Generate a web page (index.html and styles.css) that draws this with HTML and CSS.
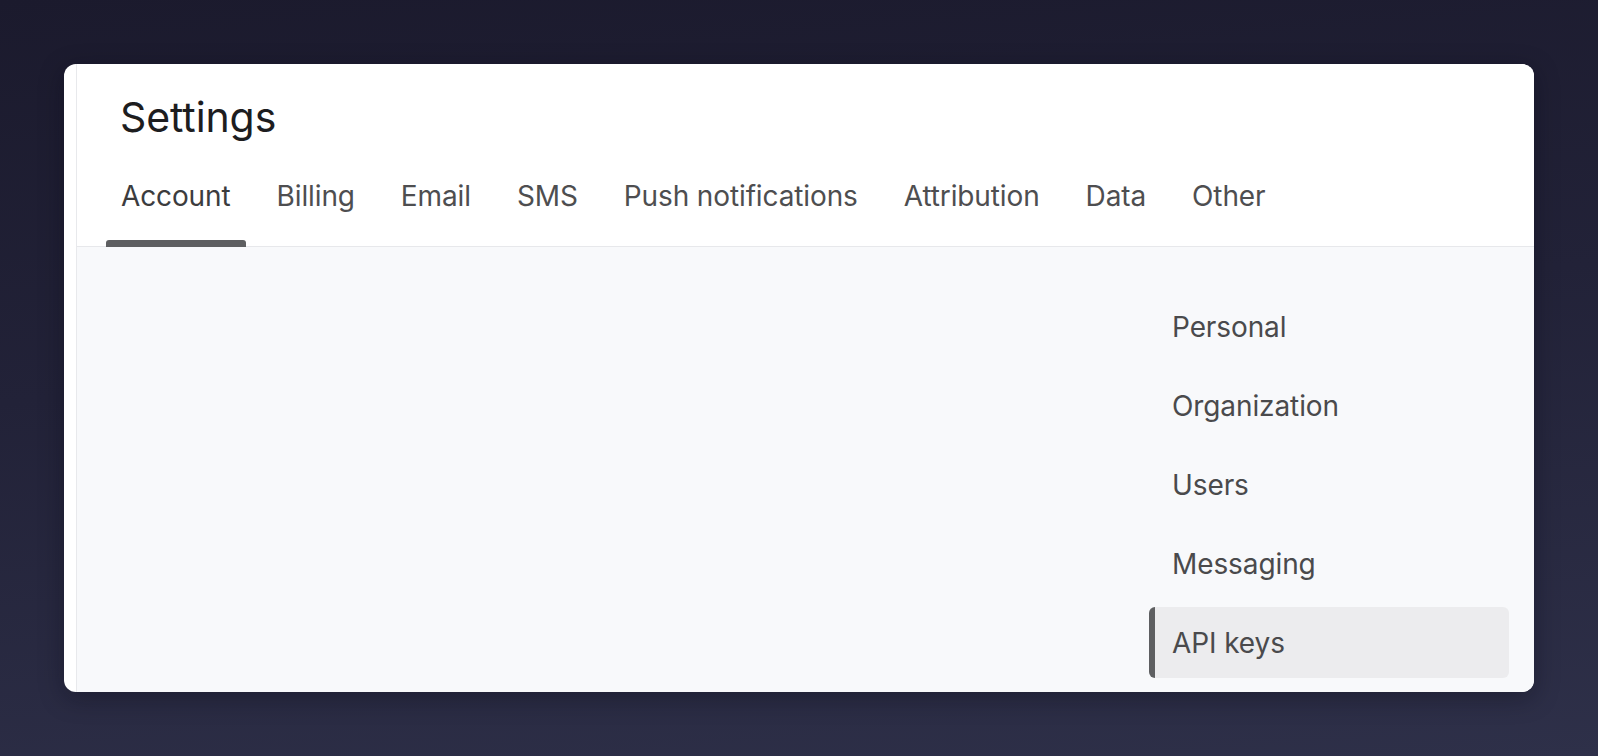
FILE: index.html
```html
<!DOCTYPE html>
<html lang="en">
<head>
<meta charset="utf-8">
<title>Settings</title>
<link rel="stylesheet" href="styles.css">
</head>
<body>
<div class="stage">
  <div class="card">
    <div class="rail"></div>
    <div class="main">
      <header class="header">
        <h1 class="title">Settings</h1>
        <nav class="tabs">
          <a class="tab tab-active">Account</a>
          <a class="tab">Billing</a>
          <a class="tab">Email</a>
          <a class="tab">SMS</a>
          <a class="tab">Push notifications</a>
          <a class="tab">Attribution</a>
          <a class="tab">Data</a>
          <a class="tab">Other</a>
        </nav>
      </header>
      <section class="content">
        <div class="body-area"></div>
        <nav class="subnav">
          <a class="sub-item">Personal</a>
          <a class="sub-item">Organization</a>
          <a class="sub-item">Users</a>
          <a class="sub-item">Messaging</a>
          <a class="sub-item sub-active">API keys</a>
        </nav>
      </section>
    </div>
  </div>
</div>
</body>
</html>
```

FILE: styles.css
```css
* { box-sizing: border-box; }
html, body {
  margin: 0;
  padding: 0;
  width: 1598px;
  height: 756px;
  overflow: hidden;
}
body {
  background: linear-gradient(175deg, #1b1a2d 0%, #222238 45%, #2e3049 100%);
  font-family: Inter, "Noto Sans", "Liberation Sans", sans-serif;
}
.stage {
  padding: 64px 0 0 64px;
}
.card {
  width: 1470px;
  height: 628px;
  background: #ffffff;
  border-radius: 12px;
  overflow: hidden;
  display: flex;
  box-shadow: 0 6px 24px rgba(8, 8, 20, 0.35);
}
.rail {
  width: 13px;
  flex: none;
  border-right: 1px solid #e8e9ec;
}
.main {
  flex: 1;
  display: flex;
  flex-direction: column;
  min-width: 0;
}
.header {
  padding: 29px 0 0 29px;
  border-bottom: 1px solid #e7e8eb;
  background: #ffffff;
}
.title {
  margin: 0 0 38px 14px;
  font-size: 41px;
  line-height: 48px;
  font-weight: 400;
  color: #1d1d1f;
  letter-spacing: -0.1px;
}
.tabs {
  display: flex;
  gap: 16px;
}
.tab {
  position: relative;
  padding: 0 15px 33px;
  font-size: 28px;
  line-height: 34px;
  color: #4e4e50;
  letter-spacing: -0.12px;
  white-space: nowrap;
}
.tab-active {
  color: #3c3c3e;
}
.tab-active::after {
  content: "";
  position: absolute;
  left: 0;
  right: 0;
  bottom: -1px;
  height: 7px;
  background: #5e5f61;
  border-radius: 3px 3px 0 0;
}
.content {
  flex: 1;
  background: #f8f9fb;
  display: flex;
  justify-content: space-between;
}
.body-area {
  flex: 1;
}
.subnav {
  width: 360px;
  margin-right: 25px;
  padding-top: 44px;
  display: flex;
  flex-direction: column;
  gap: 8px;
}
.sub-item {
  height: 71px;
  display: flex;
  align-items: center;
  padding-left: 23px;
  font-size: 28px;
  letter-spacing: -0.1px;
  color: #4a4a4c;
  border-radius: 6px;
}
.sub-active {
  background: #ececee;
  border-left: 6px solid #5e5f61;
  padding-left: 17px;
}
```
